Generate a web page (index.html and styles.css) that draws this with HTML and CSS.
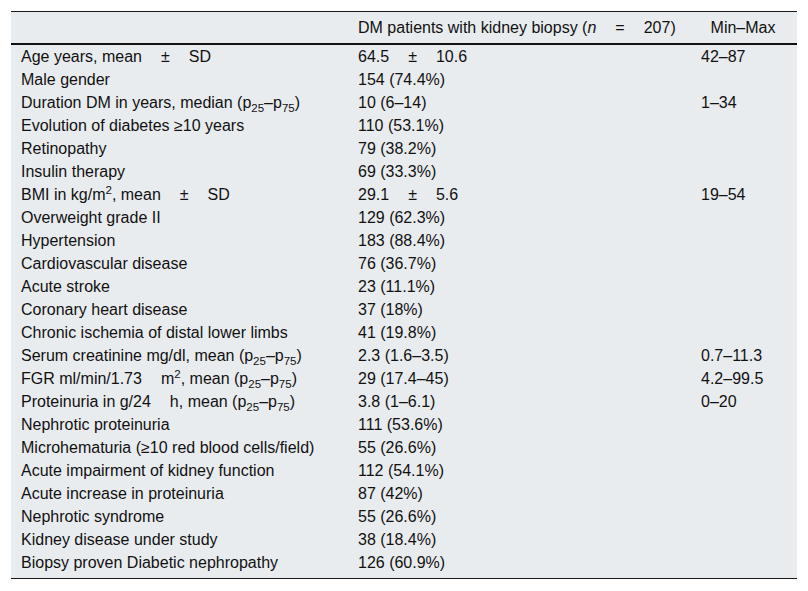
FILE: index.html
```html
<!DOCTYPE html>
<html lang="en">
<head>
<meta charset="utf-8">
<title>Table</title>
<link rel="stylesheet" href="styles.css">
</head>
<body>
<table class="data">
  <colgroup>
    <col class="c1">
    <col class="c2">
    <col class="c3">
  </colgroup>
  <thead>
    <tr>
      <th></th>
      <th class="left">DM patients with kidney biopsy (<i>n</i><span class="gap"></span>=<span class="gap"></span>207)</th>
      <th>Min–Max</th>
    </tr>
  </thead>
  <tbody>
    <tr><td>Age years, mean<span class="gap"></span>±<span class="gap"></span>SD</td><td>64.5<span class="gap"></span>±<span class="gap"></span>10.6</td><td>42–87</td></tr>
    <tr><td>Male gender</td><td>154 (74.4%)</td><td></td></tr>
    <tr><td>Duration DM in years, median (p<sub>25</sub>–p<sub>75</sub>)</td><td>10 (6–14)</td><td>1–34</td></tr>
    <tr><td>Evolution of diabetes ≥10 years</td><td>110 (53.1%)</td><td></td></tr>
    <tr><td>Retinopathy</td><td>79 (38.2%)</td><td></td></tr>
    <tr><td>Insulin therapy</td><td>69 (33.3%)</td><td></td></tr>
    <tr><td>BMI in kg/m<sup>2</sup>, mean<span class="gap"></span>±<span class="gap"></span>SD</td><td>29.1<span class="gap"></span>±<span class="gap"></span>5.6</td><td>19–54</td></tr>
    <tr><td>Overweight grade II</td><td>129 (62.3%)</td><td></td></tr>
    <tr><td>Hypertension</td><td>183 (88.4%)</td><td></td></tr>
    <tr><td>Cardiovascular disease</td><td>76 (36.7%)</td><td></td></tr>
    <tr><td>Acute stroke</td><td>23 (11.1%)</td><td></td></tr>
    <tr><td>Coronary heart disease</td><td>37 (18%)</td><td></td></tr>
    <tr><td>Chronic ischemia of distal lower limbs</td><td>41 (19.8%)</td><td></td></tr>
    <tr><td>Serum creatinine mg/dl, mean (p<sub>25</sub>–p<sub>75</sub>)</td><td>2.3 (1.6–3.5)</td><td>0.7–11.3</td></tr>
    <tr><td>FGR ml/min/1.73<span class="gap"></span>m<sup>2</sup>, mean (p<sub>25</sub>–p<sub>75</sub>)</td><td>29 (17.4–45)</td><td>4.2–99.5</td></tr>
    <tr><td>Proteinuria in g/24<span class="gap"></span>h, mean (p<sub>25</sub>–p<sub>75</sub>)</td><td>3.8 (1–6.1)</td><td>0–20</td></tr>
    <tr><td>Nephrotic proteinuria</td><td>111 (53.6%)</td><td></td></tr>
    <tr><td>Microhematuria (≥10 red blood cells/field)</td><td>55 (26.6%)</td><td></td></tr>
    <tr><td>Acute impairment of kidney function</td><td>112 (54.1%)</td><td></td></tr>
    <tr><td>Acute increase in proteinuria</td><td>87 (42%)</td><td></td></tr>
    <tr><td>Nephrotic syndrome</td><td>55 (26.6%)</td><td></td></tr>
    <tr><td>Kidney disease under study</td><td>38 (18.4%)</td><td></td></tr>
    <tr class="last"><td>Biopsy proven Diabetic nephropathy</td><td>126 (60.9%)</td><td></td></tr>
  </tbody>
</table>
</body>
</html>
```

FILE: styles.css
```css
html, body {
  margin: 0;
  padding: 0;
  background: #ffffff;
}

body {
  padding: 11px 11px 0 11px;
  font-family: "Liberation Sans", Arial, sans-serif;
  font-size: 16px;
  color: #111111;
}

.data {
  width: 786px;
  border-collapse: collapse;
  table-layout: fixed;
  background: #e9ecef;
  border-top: 1px solid #1a1a1a;
  border-bottom: 1px solid #1a1a1a;
}

.c1 { width: 337px; }
.c2 { width: 343px; }
.c3 { width: 106px; }

.data th {
  font-weight: normal;
  height: 31px;
  padding: 0 12px 0 10px;
  text-align: center;
  vertical-align: middle;
  line-height: 18px;
  border-bottom: 2px solid #111111;
}

.data th.left {
  text-align: left;
}

.data td {
  padding: 0 10px;
  height: 23px;
  line-height: 23px;
  vertical-align: middle;
  white-space: nowrap;
}

.data tr.last td {
  height: 27px;
  vertical-align: top;
}

.gap {
  display: inline-block;
  width: 19px;
}

sub, sup {
  font-size: 11.5px;
  line-height: 0;
}

i {
  font-style: italic;
}
```
